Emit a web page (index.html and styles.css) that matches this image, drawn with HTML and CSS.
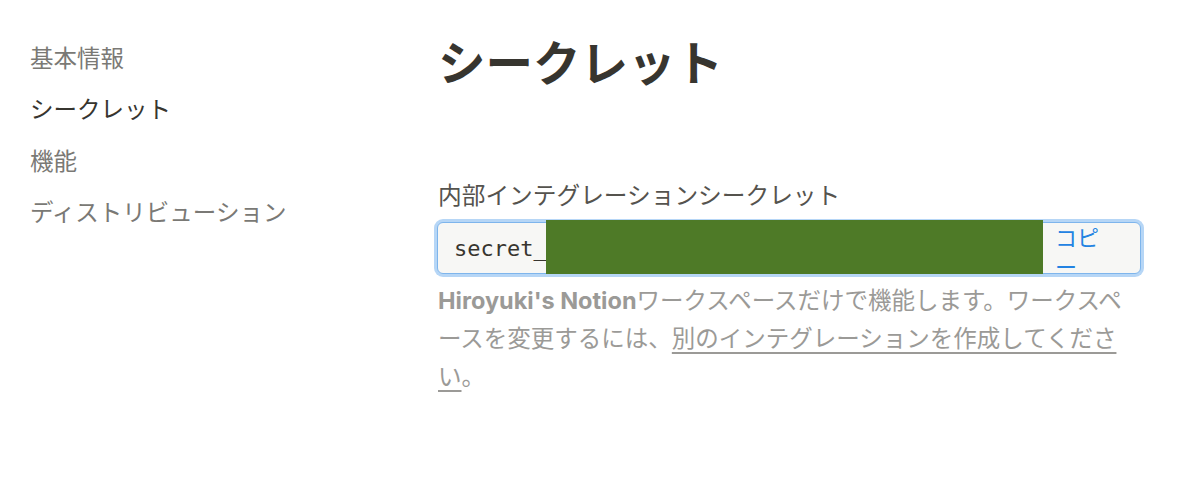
FILE: index.html
```
<!DOCTYPE html>
<html lang="ja">
<head>
<meta charset="utf-8">
<link rel="stylesheet" href="styles.css">
</head>
<body>
<div class="page">
  <nav class="sidebar">
    <div class="nav-item">基本情報</div>
    <div class="nav-item active">シークレット</div>
    <div class="nav-item">機能</div>
    <div class="nav-item">ディストリビューション</div>
  </nav>
  <main class="main">
    <h1 class="title">シークレット</h1>
    <div class="label">内部インテグレーションシークレット</div>
    <div class="field">
      <span class="secret">secret_</span>
      <button class="copy">コピー</button>
      <div class="redact"></div>
    </div>
    <p class="desc"><b>Hiroyuki's Notion</b>ワークスペースだけで機能します。ワークスペースを変更するには、<a class="link">別のインテグレーションを作成してください</a>。</p>
  </main>
</div>
</body>
</html>
```
FILE: styles.css
```
html, body {
  margin: 0;
  padding: 0;
  background: #ffffff;
}
body {
  font-family: Inter, "Noto Sans CJK JP", sans-serif;
  color: #37352f;
}
.page {
  display: flex;
  width: 1200px;
  height: 483px;
  overflow: hidden;
}
.sidebar {
  width: 438px;
  padding: 33px 0 0 30px;
  box-sizing: border-box;
  flex: none;
}
.nav-item {
  font-size: 23.5px;
  line-height: 51.3px;
  height: 51.3px;
  color: #7a7975;
  white-space: nowrap;
}
.nav-item.active {
  color: #37352f;
}
.main {
  width: 703px;
  padding-top: 35px;
  flex: none;
}
.title {
  margin: 0;
  font-size: 47.5px;
  line-height: 58px;
  font-weight: 700;
  color: #37352f;
}
.label {
  margin-top: 88px;
  font-size: 23.7px;
  line-height: 30px;
  color: #55534e;
}
.field {
  position: relative;
  margin-top: 11px;
  height: 52px;
  box-sizing: border-box;
  display: flex;
  align-items: center;
  background: #f7f7f5;
  border: 1px solid #7eb5ec;
  border-radius: 6px;
  box-shadow: 0 0 0 3px #b6d6f6;
  margin-left: -1px;
  margin-right: 0;
}
.secret {
  flex: 1;
  padding-left: 16px;
  font-family: "DejaVu Sans Mono", monospace;
  font-size: 22px;
  color: #37352f;
}
.copy {
  flex: none;
  width: 95px;
  height: 52px;
  box-sizing: border-box;
  padding: 0 26px 0 10px;
  border: none;
  background: transparent;
  color: #2383e2;
  font-family: "Noto Sans CJK JP", sans-serif;
  font-size: 22px;
  line-height: 29px;
  text-align: left;
  overflow: visible;
}
.redact {
  position: absolute;
  left: 108px;
  top: -3px;
  width: 497px;
  height: 54px;
  background: #4e7a27;
}
.desc {
  margin: 8px 0 0 0;
  font-size: 23.5px;
  line-height: 38px;
  color: #9b9a97;
}
.desc b {
  font-weight: 700;
}
.link {
  color: #9b9a97;
  text-decoration: underline;
  text-underline-offset: 5px;
}
```
